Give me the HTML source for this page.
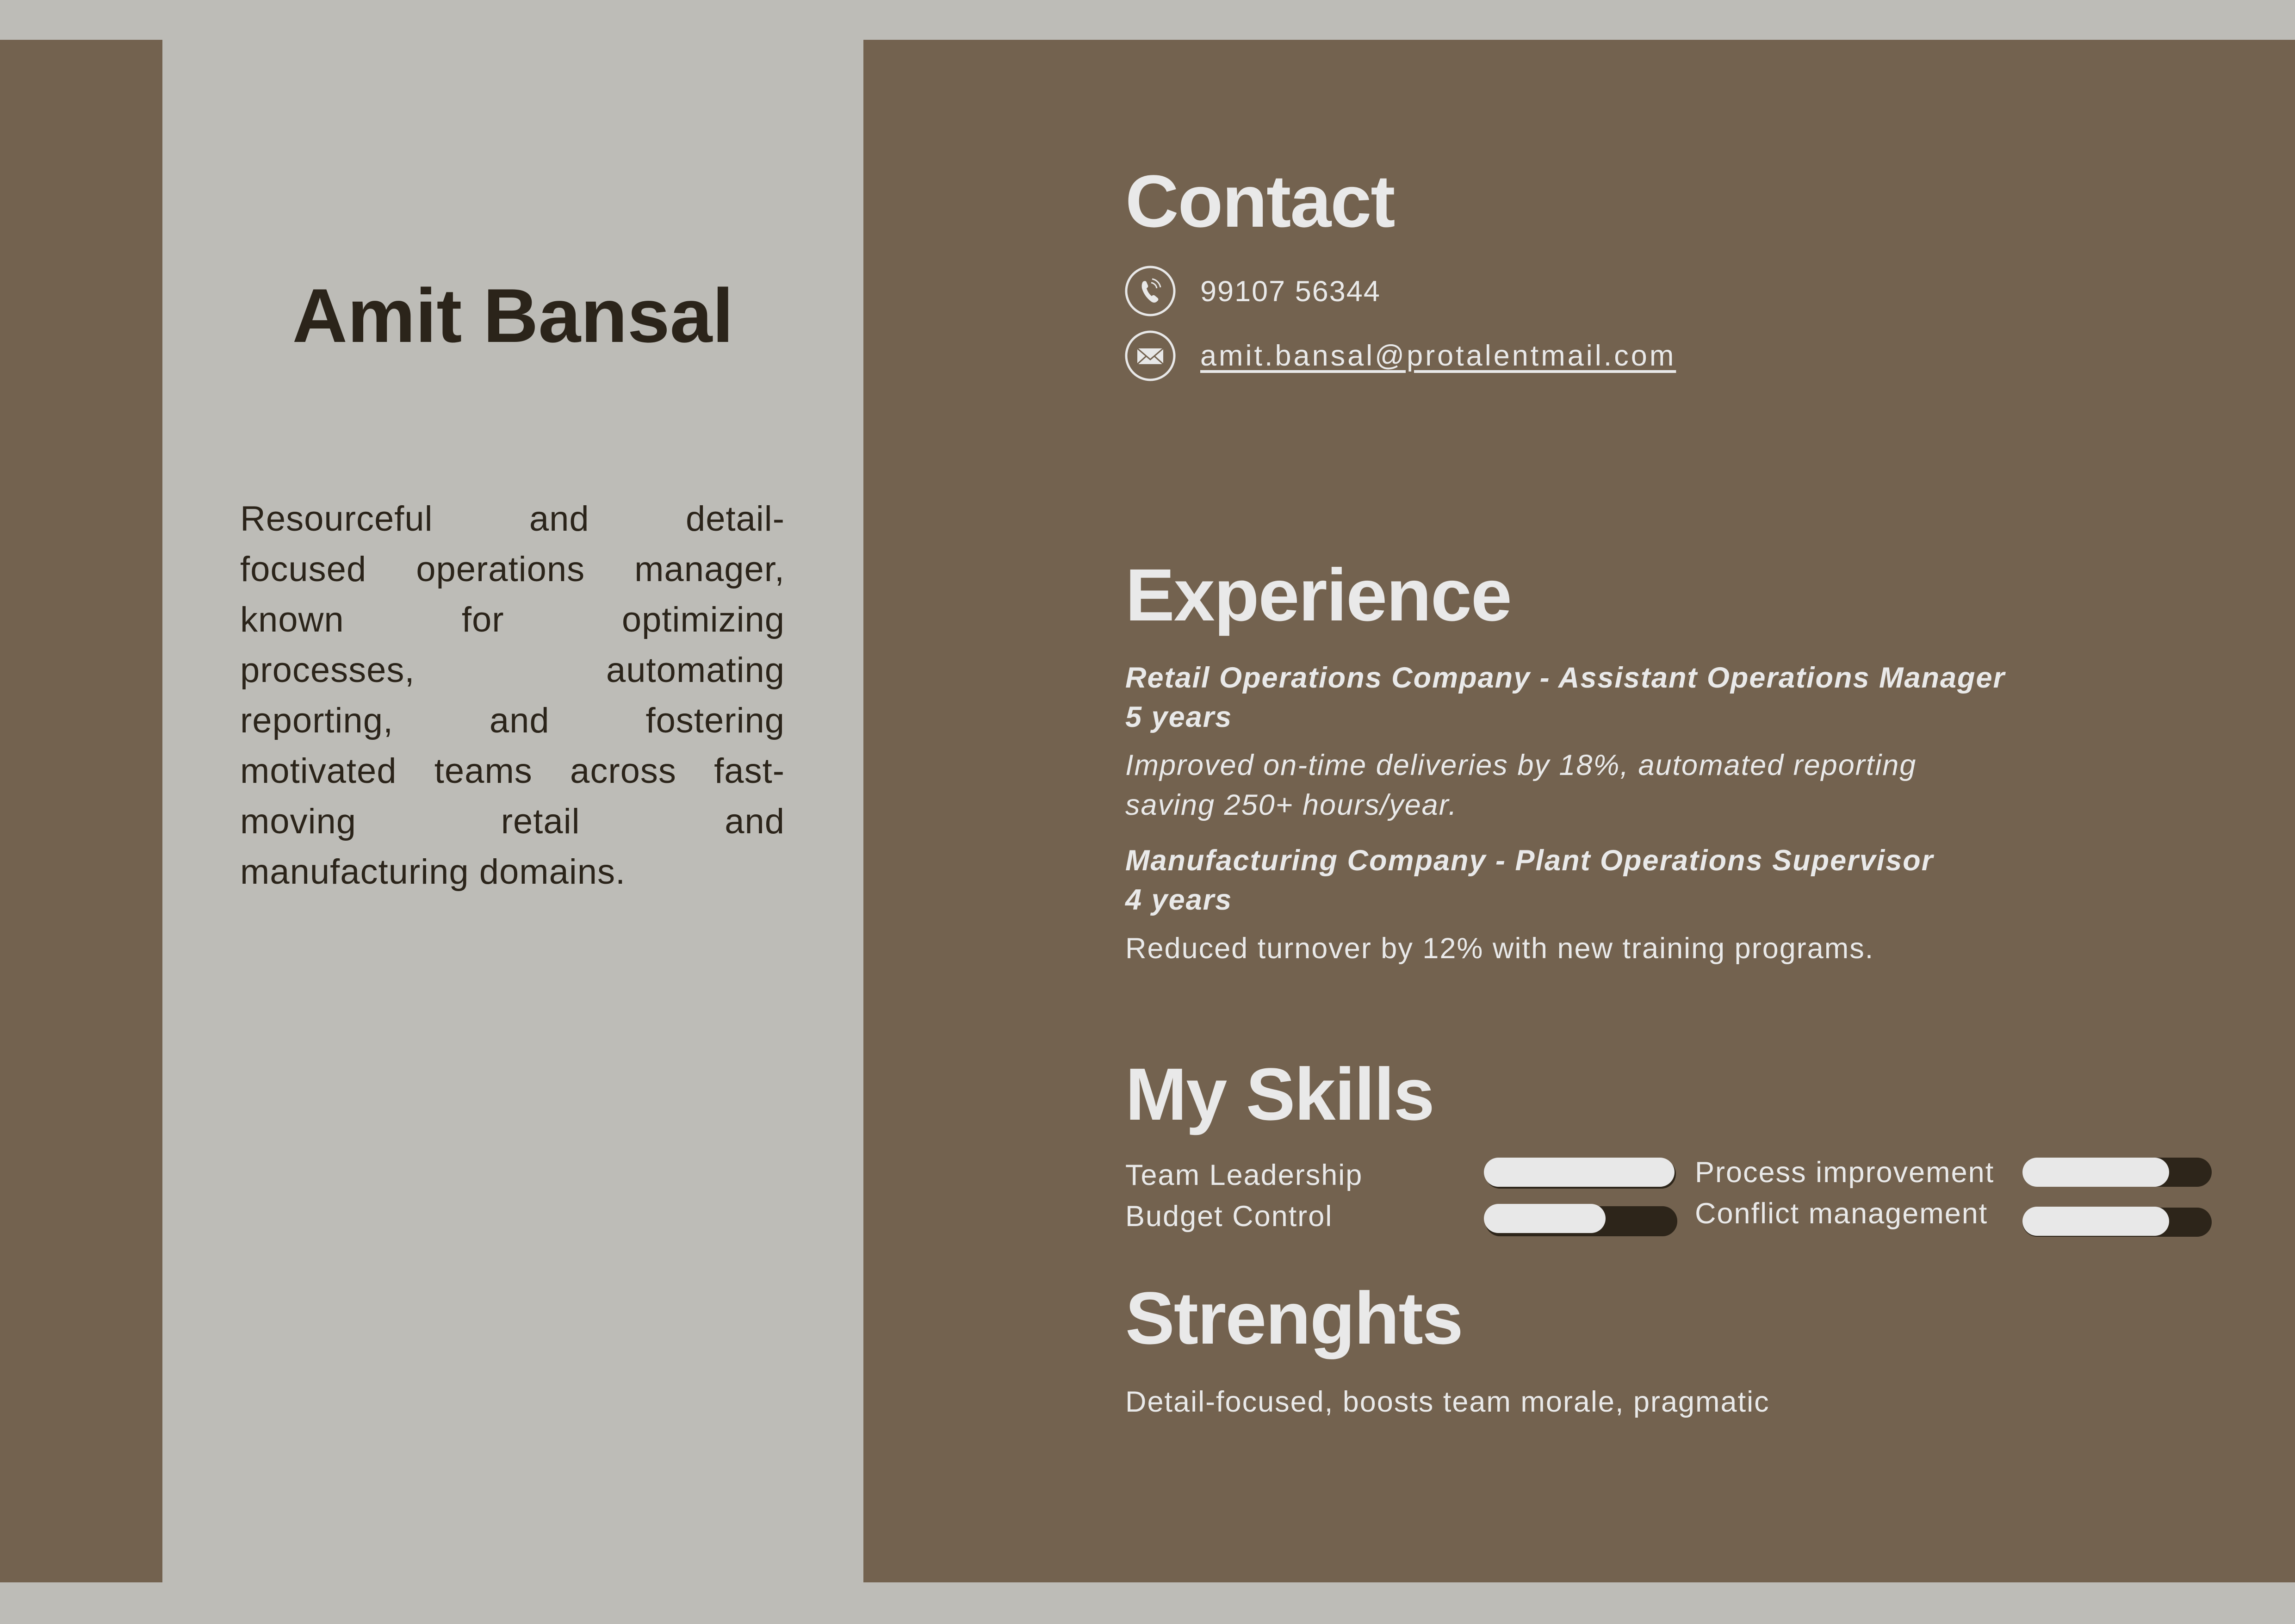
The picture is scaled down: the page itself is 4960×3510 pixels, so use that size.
<!DOCTYPE html>
<html><head><meta charset="utf-8"><style>
*{margin:0;padding:0;box-sizing:border-box}
body{width:4960px;height:3510px;background:#bdbcb7;position:relative;overflow:hidden;font-family:"Liberation Sans",sans-serif}
.a{position:absolute;white-space:nowrap;line-height:1}
.h{font-size:160px;font-weight:bold;color:#e9e9e9;left:2432px;letter-spacing:-2px}
.t{font-size:63px;color:#e9e9e9;letter-spacing:2px}
.bi{font-weight:bold;font-style:italic}
.i{font-style:italic}
.p{position:absolute;left:519px;width:1177px;font-size:76px;line-height:109px;color:#2b241a;top:1067px;letter-spacing:1px}
.p div{text-align:justify;text-align-last:justify;height:109px}
.bar{position:absolute;border-radius:32px}
.lt{background:#e8e8e8}
.dk{background:#2d251a}
</style></head><body>
<div style="position:absolute;left:0;top:86px;width:351px;height:3334px;background:#73624f"></div>
<div style="position:absolute;left:1866px;top:86px;width:3094px;height:3334px;background:#73624f"></div>

<div class="a" style="left:351px;width:1515px;text-align:center;top:600px;font-size:165px;font-weight:bold;color:#2b241a;letter-spacing:0px">Amit Bansal</div>

<div class="p">
<div>Resourceful and detail-</div>
<div>focused operations manager,</div>
<div>known for optimizing</div>
<div>processes, automating</div>
<div>reporting, and fostering</div>
<div>motivated teams across fast-</div>
<div>moving retail and</div>
<div style="text-align:left;text-align-last:left">manufacturing domains.</div>
</div>

<div class="a h" style="top:355px">Contact</div>
<svg class="a" style="left:2430px;top:573px" width="112" height="112" viewBox="0 0 112 112"><circle cx="56" cy="56" r="52" fill="none" stroke="#e8e8e8" stroke-width="5"/><path d="M40 36c4-3 7-2 8 1l3 7c1 3-1 5-3 6 2 7 6 13 11 17 2-2 4-3 7-1l6 5c2 2 2 5-1 7-4 4-9 4-14 0-9-7-16-17-19-28-1-6 0-11 2-14z" fill="#e8e8e8"/><path d="M58 38a14 14 0 0 1 12 12M60 30a22 22 0 0 1 18 18" fill="none" stroke="#e8e8e8" stroke-width="3"/></svg>
<div class="a t" style="left:2594px;top:599px">99107 56344</div>
<svg class="a" style="left:2430px;top:713px" width="112" height="112" viewBox="0 0 112 112"><circle cx="56" cy="56" r="52" fill="none" stroke="#e8e8e8" stroke-width="5"/><rect x="28" y="40" width="56" height="34" fill="#e8e8e8"/><path d="M28 40l28 24 28-24M28 74l20-18M84 74l-20-18" fill="none" stroke="#73624f" stroke-width="3"/></svg>
<div class="a t" style="left:2594px;top:738px;letter-spacing:5px;text-decoration:underline;text-underline-offset:10px">amit.bansal@protalentmail.com</div>

<div class="a h" style="top:1206px">Experience</div>
<div class="a t bi" style="left:2432px;top:1434px">Retail Operations Company - Assistant Operations Manager</div>
<div class="a t bi" style="left:2432px;top:1519px">5 years</div>
<div class="a t i" style="left:2432px;top:1623px">Improved on-time deliveries by 18%, automated reporting</div>
<div class="a t i" style="left:2432px;top:1709px">saving 250+ hours/year.</div>
<div class="a t bi" style="left:2432px;top:1829px">Manufacturing Company - Plant Operations Supervisor</div>
<div class="a t bi" style="left:2432px;top:1914px">4 years</div>
<div class="a t" style="left:2432px;top:2019px">Reduced turnover by 12% with new training programs.</div>

<div class="a h" style="top:2285px">My Skills</div>
<div class="a t" style="left:2432px;top:2509px">Team Leadership</div>
<div class="a t" style="left:2432px;top:2598px">Budget Control</div>
<div class="a t" style="left:3663px;top:2503px">Process improvement</div>
<div class="a t" style="left:3663px;top:2592px">Conflict management</div>

<div class="bar dk" style="left:3210px;top:2506px;width:412px;height:63px"></div>
<div class="bar lt" style="left:3207px;top:2502px;width:412px;height:63px"></div>
<div class="bar dk" style="left:3210px;top:2607px;width:415px;height:65px"></div>
<div class="bar lt" style="left:3207px;top:2602px;width:263px;height:63px"></div>
<div class="bar dk" style="left:4371px;top:2502px;width:409px;height:63px"></div>
<div class="bar lt" style="left:4371px;top:2502px;width:317px;height:63px"></div>
<div class="bar dk" style="left:4371px;top:2610px;width:409px;height:63px"></div>
<div class="bar lt" style="left:4371px;top:2608px;width:317px;height:63px"></div>

<div class="a h" style="top:2769px">Strenghts</div>
<div class="a t" style="left:2432px;top:2999px">Detail-focused, boosts team morale, pragmatic</div>
</body></html>
